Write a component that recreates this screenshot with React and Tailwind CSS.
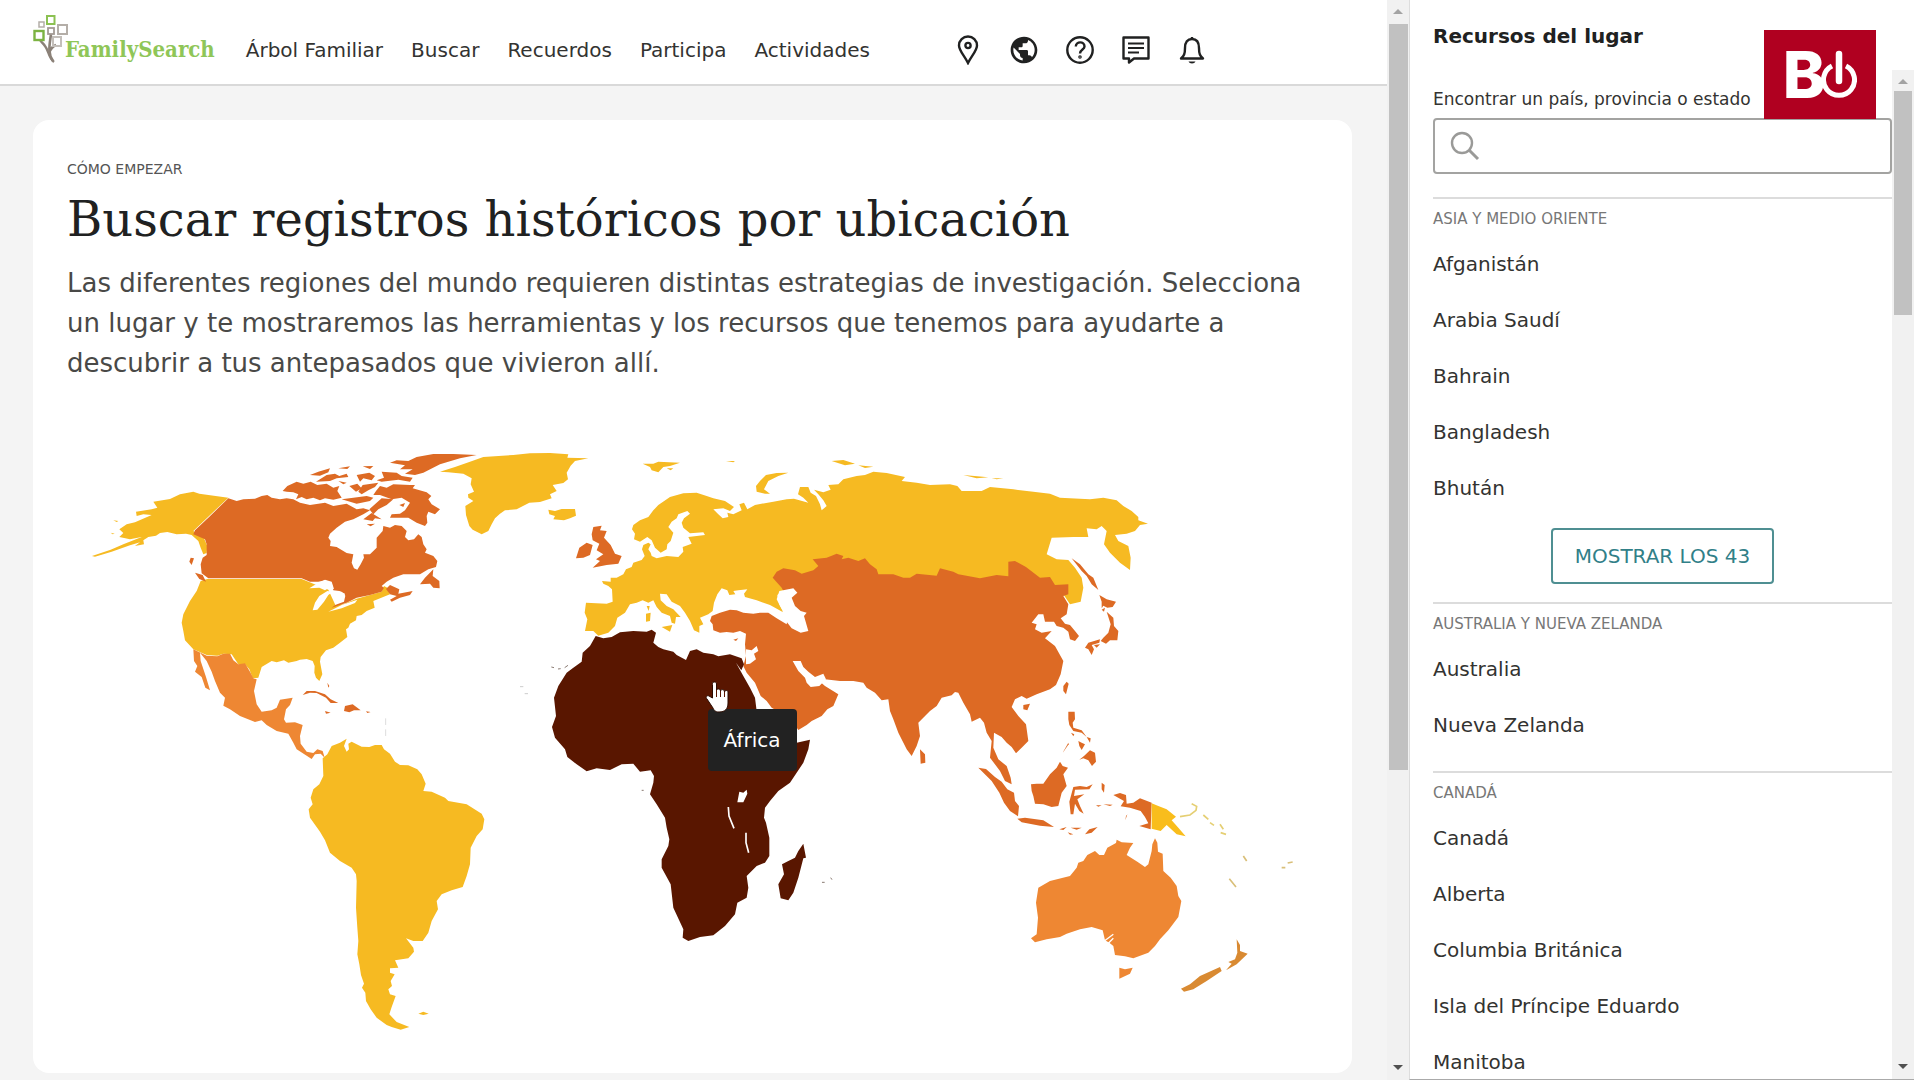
import { useState } from "react";
import { MdPublic } from "react-icons/md";

const NAV = ["Árbol Familiar", "Buscar", "Recuerdos", "Participa", "Actividades"];

const REGIONS = [
  {
    name: "Asia y Medio Oriente",
    places: ["Afganistán", "Arabia Saudí", "Bahrain", "Bangladesh", "Bhután"],
    more: "Mostrar los 43",
  },
  { name: "Australia y Nueva Zelanda", places: ["Australia", "Nueva Zelanda"] },
  {
    name: "Canadá",
    places: ["Canadá", "Alberta", "Columbia Británica", "Isla del Príncipe Eduardo", "Manitoba"],
  },
];

const YELLOW = "#f6ba22";
const ORANGE = "#dd6a24";
const AMBER = "#ee8733";
const DARK = "#591600";

function TreeMark() {
  return (
    <svg width="36" height="48" viewBox="0 0 36 48" fill="none" aria-hidden="true">
      <path d="M21 47C15 42 16 36 12 31C10 28 8 27 7 25" stroke="#8b8178" strokeWidth="2.4" />
      <path d="M20 46C14 38 17 28 18 19M16 38C18 33 20 31 23 30" stroke="#8b8178" strokeWidth="2.6" />
      <rect x="14" y="1" width="7.500" height="8" stroke="#8cc152" strokeWidth="2" />
      <rect x="6" y="7" width="5" height="5" stroke="#b4aea8" strokeWidth="1.500" />
      <rect x="15" y="13" width="6" height="6" stroke="#a39b94" strokeWidth="1.800" />
      <rect x="25" y="10" width="9" height="9" stroke="#b4aea8" strokeWidth="2" />
      <rect x="1.500" y="16" width="9" height="9" stroke="#7cb342" strokeWidth="2.400" />
      <rect x="20" y="22" width="8" height="9" stroke="#c4bfba" strokeWidth="2" />
    </svg>
  );
}

function PinIcon() {
  return (
    <svg width="28" height="30" viewBox="0 0 28 30" fill="none" stroke="#202121" strokeWidth="2.4" aria-hidden="true">
      <path d="M14 28C10 20 5 15.500 5 10.500a9 9 0 0 1 18 0C23 15.500 18 20 14 28Z" />
      <circle cx="14" cy="10.500" r="2.600" />
    </svg>
  );
}

function HelpIcon() {
  return (
    <svg width="28" height="30" viewBox="0 0 28 30" fill="none" stroke="#202121" strokeWidth="2.400" aria-hidden="true">
      <circle cx="14" cy="15" r="12.700" />
      <path d="M9.800 11.500C10 6 18.500 6 18.500 11.500C18.500 14.500 14 14.500 14 18.500" />
      <circle cx="14" cy="22" r="0.600" />
    </svg>
  );
}

function MessageIcon() {
  return (
    <svg width="28" height="30" viewBox="0 0 28 30" fill="none" stroke="#202121" strokeWidth="2.400" aria-hidden="true">
      <path d="M1.500 2.500H26.500V23.500H12L7 27.500V23.500H1.500Z" strokeLinejoin="round" />
      <path d="M6 8.500H22M6 13H22M6 17.500H17" strokeWidth="2" />
    </svg>
  );
}

function BellIcon() {
  return (
    <svg width="28" height="30" viewBox="0 0 28 30" fill="none" stroke="#202121" strokeWidth="2.400" aria-hidden="true">
      <path d="M3 23.500C6 21 7 19 7 13C7 7 9.500 4 14 4S21 7 21 13C21 19 22 21 25 23.500Z" strokeLinejoin="round" />
      <path d="M10.500 26.500H17.500C16.500 29 11.500 29 10.500 26.500Z" fill="#202121" stroke="none" />
      <path d="M14 2V4" />
    </svg>
  );
}

function ScrollTrack({ thumb }) {
  return (
    <div className="flex w-[22px] shrink-0 flex-col items-center bg-[#f1f1f1] pb-1" aria-hidden="true">
      <svg width="10" height="20" viewBox="0 0 10 20" className="shrink-0">
        <path d="M0 14L5 9L10 14Z" fill="#a3a3a3" />
      </svg>
      <div className={thumb} />
      <svg width="10" height="20" viewBox="0 0 10 20" className="mt-auto shrink-0">
        <path d="M0 9L5 14L10 9Z" fill="#505050" />
      </svg>
    </div>
  );
}

function WorldMap() {
  return (
    <svg viewBox="67 430 1251 610" className="block h-auto w-full" role="img" aria-label="Mapa del mundo">
      {/* América del Norte */}
      <g transform="translate(80 430) scale(0.33333)">
        <g fill={YELLOW}>
          <path d="M340 182L358 188L445 200L340 300L372 322L382 345L380 366L370 370L362 350L355 330L335 312L318 308L290 310L262 303L240 306L228 314L205 318L190 328L192 340L165 345L180 334L150 343L95 362L45 377L36 375L92 356L130 340L185 318L150 325L118 318L130 306L118 295L140 280L165 274L215 252L190 250L170 255L168 242L215 235L232 230L220 212L270 204L300 190Z" />
          <path d="M382 444H665L700 458L745 476L765 520L790 520L830 503L905 482L912 465L922 470L930 490L880 510L884 530L860 540L845 552L830 555L828 568L810 578L805 590L798 595L802 618L780 635L760 650L738 658L722 678L720 692L727 730L718 750L708 740L703 725L704 705L698 690L680 684L660 686L650 690L625 695L612 688L590 694L575 690L545 708L535 740L518 742L508 715L495 700L475 700L455 670L430 668L412 674L380 672L340 655L315 628L310 600L305 575L310 550L330 510L350 480L362 450Z" />
          <path d="M100 268L115 270L110 273ZM92 305L104 308L98 310Z" />
        </g>
        <g fill={ORANGE}>
          <path d="M445 202L470 210L490 205L525 203L545 195L562 192L575 200L600 205L620 202L640 205L660 215L690 222L735 215L760 225L800 218L830 235L850 232L870 238L850 250L820 265L795 272L770 290L750 308L745 320L752 330L750 345L770 348L800 366L820 370L815 395L822 412L832 416L842 400L852 380L850 370L870 370L890 350L890 320L908 300L910 285L930 290L945 282L965 285L980 300L975 318L985 328L1002 325L1015 310L1025 318L1030 340L1040 355L1035 365L1060 375L1072 390L1068 408L1045 415L1020 430L970 430L940 440L920 452L905 465L912 470L905 482L870 492L830 500L800 515L755 530L775 515L790 508L795 488L778 480L760 478L755 455L735 448L715 452L690 452L665 442H385L365 427L362 400L368 380L380 372L380 340L375 325L340 310L345 298L385 260Z" />
          <path d="M918 474L930 462L958 475L955 488L998 480L990 492L960 500L935 512L930 506L950 495L930 490Z" />
          <path d="M1020 460L1035 440L1060 415L1058 435L1078 450L1079 472L1060 470L1050 458Z" />
          <path d="M345 425L368 432L378 452L358 444ZM332 380L342 382L335 402L328 392Z" />
          <path d="M608 180L622 165L650 152L670 158L692 152L712 162L740 158L760 170L778 165L772 180L785 200L760 206L735 202L720 208L700 200L680 205L665 198L648 205L655 190L640 184L620 182Z" />
          <path d="M690 132L715 122L750 112L745 124L720 134ZM708 152L740 132L765 128L778 135L800 128L805 138L770 142L750 150ZM775 112L810 106L802 114ZM848 106L880 105L870 114ZM830 132L868 125L885 135L875 148L850 142L840 152ZM905 122L950 125L965 135L998 140L990 152L955 146L905 152L890 148L912 140Z" />
          <path d="M808 165L832 158L845 172L828 182ZM848 162L895 155L885 168L865 178L845 190L835 182ZM785 205L820 200L860 195L880 200L870 210L830 218ZM775 150L800 155L790 160Z" />
          <path d="M930 95L950 88L985 90L1010 78L1060 69L1120 69L1190 72L1140 82L1080 100L1030 125L1005 132L975 128L998 115L960 115L975 103Z" />
          <path d="M888 180L900 165L920 170L940 160L990 162L1005 162L998 172L1040 184L1054 195L1045 205L1055 220L1080 235L1065 250L1045 242L1040 255L1042 275L1035 285L1010 275L985 260L930 260L935 250L960 248L975 238L990 215L965 200L935 205L900 192L880 192Z" />
          <path d="M868 235L905 202L940 205L920 222L895 235L880 250ZM850 265L875 246L905 265L885 262L878 270ZM958 222L975 216L970 228ZM860 280L885 278L872 286Z" />
        </g>
        <g fill="#fff">
          <path d="M688 472L710 458L735 446L755 452L762 474L745 472L735 478L718 470Z" />
          <path d="M698 538L705 515L718 495L742 480L758 482L745 492L732 512L712 536Z" />
          <path d="M755 480L785 482L796 494L792 512L765 522L770 505Z" />
          <path d="M745 542L785 522L832 506L825 516L785 532Z" />
        </g>
        <path
          d="M340 655L380 674L412 676L430 668L450 668L460 688L475 700L495 697L510 722L520 742L530 745L522 780L530 820L545 842L575 838L590 830L600 806L638 800L630 822L618 835L612 865L618 875L645 874L668 882L660 915L662 938L680 962L700 966L712 955L728 960L734 980L722 968L705 970L695 984L650 955L640 935L625 908L590 900L560 882L545 868L525 873L480 855L450 835L430 824L435 800L420 785L405 750L395 722L380 690L360 665L362 690L378 738L390 778L376 770L365 738L345 722L352 705L342 690Z"
          fill={AMBER}
        />
        <g fill={ORANGE}>
          <path d="M668 792L680 780L705 780L735 790L752 805L775 816L752 816L738 800L710 786L690 785ZM795 825L818 820L842 838L822 838L808 844L792 840ZM735 840L752 845L738 848ZM858 841L872 843L862 846ZM742 755L748 765L745 770Z" />
        </g>
        <path d="M917 862V882M917 895V915" stroke="#ddd" strokeWidth="3" />
      </g>

      {/* América del Sur */}
      <g transform="translate(280 720) scale(0.33333)" fill={YELLOW}>
        <path d="M128 112L142 100L155 75L180 65L200 53L192 75L200 92L207 85L205 68L215 62L245 77L268 78L285 72L305 72L312 85L330 98L345 122L360 132L385 133L412 145L425 160L437 188L430 210L455 212L495 230L505 240L560 250L605 278L613 295L608 325L590 345L572 380L570 430L560 465L548 498L515 508L485 520L470 540L474 565L455 600L445 635L428 660L400 660L378 652L400 680L402 692L385 712L345 718L355 740L330 742L330 755L344 760L332 780L336 795L325 805L330 820L347 825L335 858L328 880L350 903L388 918L362 926L335 918L320 912L290 890L272 865L258 840L256 815L246 800L252 788L243 762L238 730L232 700L235 660L232 620L228 560L230 480L228 460L215 440L180 420L150 395L135 358L120 332L90 290L86 265L98 250L92 230L100 205L118 190L130 165Z" />
        <path d="M415 878L430 872L446 878L430 882Z" />
      </g>

      {/* Groenlandia y Europa */}
      <g transform="translate(440 430) scale(0.33333)">
        <g fill={YELLOW}>
          <path d="M0 122L45 108L90 92L130 78L220 72L270 67L330 66L385 70L382 80L445 82L405 90L392 104L380 125L384 145L370 156L338 162L350 180L330 190L335 202L300 213L268 215L230 235L195 238L180 248L165 262L155 280L145 300L125 310L98 296L88 285L78 252L76 225L100 210L85 200L84 190L102 182L92 160L95 142L70 128L25 124Z" />
          <path d="M325 236L345 240L365 234L405 234L408 254L390 262L372 268L340 265L345 255L328 250Z" />
          <path d="M608 98L640 98L655 92L720 95L690 105L670 108L655 124L635 118L630 108ZM680 112L700 112L692 118ZM858 90L885 90L880 94Z" />
          <path d="M1045 125L1010 126L978 132L960 150L948 165L950 182L975 188L990 188L972 175L985 150L1015 135Z" />
          <path d="M1175 90L1210 87L1245 98L1215 103ZM1255 103L1300 107L1275 111ZM1570 132L1645 139L1610 142ZM1655 142L1690 142L1670 145Z" />
          <path d="M438 515L500 518L518 512L516 475L505 465L490 458L486 450L512 452L512 440L530 440L550 430L558 415L575 408L580 395L605 387L614 375L606 355L610 342L625 335L632 340L625 355L632 365L635 375L650 382L680 375L715 378L730 362L728 348L755 338L745 318L795 312L790 304L750 307L730 290L725 275L732 262L750 248L742 240L715 250L710 262L695 272L685 288L700 305L692 330L682 340L680 355L662 365L645 350L635 328L622 318L600 332L582 325L585 308L576 295L580 282L600 268L625 258L640 238L655 222L690 198L730 187L770 185L800 195L820 202L855 210L882 228L870 240L850 232L820 235L835 250L848 262L865 258L862 245L880 250L905 238L898 220L912 215L922 235L945 222L1000 212L1040 205L1062 203L1105 215L1090 200L1074 190L1080 168L1105 168L1112 185L1128 195L1140 220L1145 238L1160 225L1150 208L1135 190L1122 176L1150 184L1172 176L1165 162L1195 160L1210 145L1250 135L1275 132L1300 122L1340 126L1395 138L1385 150L1430 155L1470 162L1530 160L1552 165L1565 180L1625 180L1650 168L1720 175L1780 182L1830 188L1860 200L1950 205L1990 200L2030 208L2050 225L2075 240L2095 258L2095 268L2124 278L2100 282L2085 300L2060 308L2025 312L2035 330L2065 345L2072 380L2070 417L2040 395L2010 365L1992 340L2000 300L1985 285L1970 295L1940 292L1945 318L1900 318L1835 320L1820 370L1850 385L1885 387L1905 410L1925 440L1930 470L1922 512L1890 520L1870 490L1700 450H1150L1000 440L1035 475L1012 492L1018 520L1032 545L990 522L950 508L915 498L912 488L922 475L895 478L880 480L886 490L868 492L862 478L845 472L832 490L822 515L818 540L805 550L780 560L790 580L778 585L778 605L762 598L750 570L735 545L720 525L695 512L680 490L660 488L662 508L680 525L700 535L722 558L708 558L705 578L695 575L690 555L665 545L650 528L640 508L625 515L608 508L590 515L570 520L555 545L532 560L525 585L505 605L475 614L460 600L435 600L442 565L434 545Z" />
          <path d="M665 588L697 582L690 602ZM618 548L632 545L630 570L618 572ZM620 525L629 525L626 540Z" />
        </g>
        <g fill={ORANGE}>
          <path d="M455 310L460 288L485 284L480 298L500 300L492 320L512 342L525 368L545 375L535 398L500 402L458 410L480 390L468 385L490 370L470 358L478 338L458 328ZM408 382L418 350L440 335L458 342L450 372L430 380Z" />
        </g>
      </g>

      {/* Asia */}
      <g transform="translate(740 430) scale(0.33333)">
        <g fill={ORANGE}>
          <path d="M98 440L110 422L130 412L165 418L185 428L220 418L235 405L218 385L260 380L290 368L310 375L305 385L325 380L355 390L375 382L390 400L410 415L415 430L460 430L490 440L510 440L530 428L590 434L600 412L640 422L655 430L720 442L770 432L805 436L805 392L825 390L858 408L900 440L930 438L945 462L985 460L985 490L970 495L985 520L980 550L962 562L975 578L990 582L1005 600L1017 615L1005 630L990 625L985 602L970 590L950 585L942 572L915 572L910 550L895 550L875 575L890 580L885 595L905 605L935 600L915 622L945 645L960 672L970 690L962 730L948 762L930 775L890 790L860 803L845 795L825 805L815 828L835 855L858 880L865 930L845 950L828 967L815 948L800 935L785 918L762 905L760 950L775 985L800 1005L812 1040L815 1060L795 1050L780 1020L750 980L755 930L740 905L732 875L720 860L695 872L690 850L670 815L655 785L645 783L635 793L605 800L590 825L570 840L535 875L540 915L530 945L515 975L500 955L475 905L460 865L450 840L445 805L425 808L405 785L380 770L370 755L340 750L300 750L255 745L250 732L235 748L255 765L295 790L280 825L262 835L245 855L215 870L200 882L175 897L150 860L95 830L80 810L62 795L45 755L20 725L10 705L18 675L15 640L18 608L0 600L-20 605L-40 603L-60 605L-80 598L-82 580L-90 570L-85 555L-60 545L-30 536L-10 538L10 545L40 548L60 545L85 545L110 562L140 580L150 520L125 470Z" />
          <path d="M995 382L1020 400L1045 430L1060 440L1075 477L1055 460L1040 435L1025 420ZM1078 492L1100 505L1128 512L1118 528L1102 530L1090 524L1085 532L1085 512ZM1100 542L1120 560L1122 585L1135 600L1132 628L1110 628L1098 638L1082 630L1090 620L1105 605L1112 580ZM1035 650L1045 635L1080 625L1078 635L1055 642L1062 655L1055 672L1045 655ZM1062 642L1080 640L1070 650ZM1085 536L1095 530L1092 542Z" />
          <path d="M970 765L980 752L986 758L978 790L970 780ZM850 822L870 818L862 838L850 835ZM540 955L555 970L556 995L542 998Z" />
          <path d="M-20 626L-5 622L-12 630Z" />
        </g>
        <g fill="#fff">
          <path d="M110 505L118 480L160 472L172 485L155 500L165 525L182 540L200 545L192 555L205 600L182 605L155 592L138 570L125 560L128 540L120 525Z" />
          <path d="M158 690L182 690L190 708L205 722L225 738L250 728L258 745L238 765L212 768L200 755L195 740L175 720Z" />
          <path d="M18 655L35 658L50 645L55 660L42 668L48 685L30 698L18 700Z" />
        </g>
      </g>

      {/* África */}
      <g transform="translate(530 600) scale(0.33333)">
        <path
          className="cursor-pointer"
          d="M197 105L220 112L245 108L270 94L310 90L350 92L365 86L378 95L370 125L385 138L400 145L430 152L440 162L468 177L480 150L500 145L520 155L550 160L565 166L600 160L635 172L642 190L634 208L618 185L640 225L660 260L675 290L680 330L710 380L735 410L770 430L800 425L840 416L835 445L820 485L800 515L780 545L745 570L720 600L705 620L702 650L708 665L718 710L718 765L705 785L680 795L650 825L655 860L650 890L622 905L615 940L585 975L550 1003L510 1008L475 1020L458 1010L460 985L430 920L422 850L395 800L395 775L415 735L418 715L410 680L405 650L380 610L360 580L370 545L372 525L362 508L330 512L310 488L275 490L240 507L200 502L170 511L140 490L112 468L105 445L75 410L66 378L78 345L72 290L85 255L110 215L130 200L155 182L158 155L180 135Z"
          fill={DARK}
        />
        <path d="M820 728L828 770L820 772L805 830L790 875L775 898L752 892L745 850L762 820L756 790L775 780L795 770L805 750Z" fill={DARK} />
        <path d="M628 572L640 575L650 566L652 578L640 604L622 604Z" fill="#fff" />
        <path d="M595 618L597 645L612 682M648 695L648 725L656 755" stroke="#fff" strokeWidth="5" fill="none" />
        <path d="M64 198L72 200M84 204L92 203M104 200L114 193M335 568H341M876 844H884M902 830L906 836" stroke="#8a7a72" strokeWidth="3" />
        <path d="M-30 257H-20M-16 278H-6" stroke="#ccc" strokeWidth="3" />
      </g>

      {/* Sudeste asiático y Oceanía */}
      <g transform="translate(900 650) scale(0.33333)">
        <g fill={ORANGE}>
          <path d="M235 350L258 354L285 378L305 392L322 415L342 425L345 450L357 465L354 496L330 480L312 455L298 425L275 390Z" />
          <path d="M352 503L375 500L430 508L462 528L420 524L365 514ZM478 535L500 528L490 537ZM512 530L545 530L530 536ZM503 544L520 550L510 551ZM555 550L568 535L593 528L575 545Z" />
          <path d="M393 400L410 398L430 398L450 370L470 350L480 332L488 345L504 350L490 370L500 405L485 425L475 465L455 468L430 460L405 458L400 435L395 420Z" />
          <path d="M512 490L508 452L520 408L540 405L560 408L578 400L568 415L525 416L522 435L553 430L532 445L540 465L551 488L538 480L525 458L520 490Z" />
          <path d="M605 395L614 402L612 425L605 415ZM588 463L605 463L595 467ZM610 460L638 461L630 465ZM678 495L682 490L676 508Z" />
          <path d="M640 432L660 426L678 432L680 458L700 455L720 442L755 455L752 535L718 525L745 517L735 498L722 480L690 470L662 466L672 450Z" />
          <path d="M505 182L524 182L525 205L518 215L520 230L545 238L560 258L545 245L520 240L508 222L505 205ZM535 270L545 275L555 280L545 297L538 285ZM560 258L572 262L570 275ZM513 245L523 250L520 256ZM538 326L552 315L570 298L585 305L588 332L576 345L565 328L550 322Z" />
          <path d="M505 275L488 305L492 300L506 280Z" />
        </g>
        <path d="M755 457L775 465L800 475L828 497L815 508L835 530L857 556L830 550L800 522L782 540L755 533Z" fill="#f9bd1c" />
        <path d="M840 497L870 492L888 478L890 466L875 458M910 492L925 505M930 515L942 523M960 520L970 535M962 545L978 550" stroke="#e5cf73" strokeWidth="5" fill="none" />
        <path d="M988 683L1008 708M1030 615L1040 630M1145 650H1156M1163 636L1178 633" stroke="#d9bf79" strokeWidth="5" fill="none" />
        <g fill={AMBER}>
          <path d="M393 862L410 850L414 800L408 755L415 710L450 690L510 675L530 650L535 635L550 630L562 612L585 600L598 612L612 612L622 590L648 576L650 566L665 574L700 576L690 590L680 612L712 632L735 648L745 640L755 600L757 580L765 562L772 575L774 602L788 608L790 660L812 680L830 705L835 735L844 750L835 798L805 838L780 865L765 885L745 905L700 922L675 916L645 912L640 885L628 875L615 868L608 838L575 828L540 835L500 848L480 858L440 865L405 874Z" />
          <path d="M658 950L675 955L698 950L690 968L658 983Z" />
        </g>
        <path d="M843 1013L870 1000L900 975L960 948L965 960L920 990L880 1015L852 1022ZM1010 865L1020 882L1020 900L1043 908L1010 940L978 958L995 938L985 933L1005 925L1012 905Z" fill="#d98a32" />
        <path d="M610 872L640 850M622 880L640 862" stroke="#fff" strokeWidth="4" />
      </g>
    </svg>
  );
}

function HandCursor() {
  return (
    <svg width="24" height="32" viewBox="0 0 24 32" aria-hidden="true">
      <path
        d="M9 1C7 1 7.500 3 7.500 5V17L4 15C2 14 0 16 2 18L8 27C9 29 10 31 14 31C20 31 23 28 23 22V11C23 9 20 9 19.500 11C19.500 8 16 8 15.500 10C15 7 12 8 11.500 9V3C11.500 1 10 1 9 1Z"
        fill="#fff"
        stroke="#2b0b00"
        strokeWidth="1"
      />
      <path d="M11.500 9V16M15.500 10V16M19.500 11V16" stroke="#591600" strokeWidth="1" />
    </svg>
  );
}

export default function App() {
  const [query, setQuery] = useState("");

  return (
    <div className="flex h-screen overflow-hidden bg-[#f4f4f4] font-['DejaVu_Sans',Verdana,sans-serif] text-[#333331]">
      <div className="flex min-w-0 flex-1 flex-col">
        <header className="flex h-[86px] shrink-0 items-center border-b-2 border-[#d9d9d9] bg-white pl-[33px]">
          <a href="#inicio" className="flex h-[54px] items-start">
            <TreeMark />
            <span className="-ml-1 pt-5 font-['DejaVu_Serif_Condensed','DejaVu_Serif',serif] text-[22px] leading-7 font-bold text-[#8fc658]">
              FamilySearch
            </span>
          </a>
          <nav className="flex gap-7 pt-4 pl-[31px] text-xl whitespace-nowrap">
            {NAV.map((item) => (
              <a key={item} href="#nav">
                {item}
              </a>
            ))}
          </nav>
          <div className="flex items-center gap-7 pt-4 pl-[84px] text-[#202121]">
            <button type="button" aria-label="Lugares"><PinIcon /></button>
            <button type="button" aria-label="Idioma"><MdPublic size={32} className="-mx-[2px]" /></button>
            <button type="button" aria-label="Ayuda"><HelpIcon /></button>
            <button type="button" aria-label="Mensajes"><MessageIcon /></button>
            <button type="button" aria-label="Notificaciones"><BellIcon /></button>
          </div>
        </header>

        <main className="pt-[34px] pr-[35px] pl-[33px]">
          <section className="rounded-2xl bg-white px-[34px] pt-[39px] pb-8">
            <p className="text-sm leading-5 text-[#555] uppercase">Cómo empezar</p>
            <h1 className="pt-1 font-['DejaVu_Serif',serif] text-5xl leading-[72px] whitespace-nowrap text-[#202121]">
              Buscar registros históricos por ubicación
            </h1>
            <p className="pt-2 text-[26px] leading-10 text-[#494947]">
              Las diferentes regiones del mundo requieren distintas estrategias de investigación. Selecciona un lugar y te
              mostraremos las herramientas y los recursos que tenemos para ayudarte a descubrir a tus antepasados que
              vivieron allí.
            </p>
            <div className="relative mt-12">
              <WorldMap />
              <div className="absolute top-[45.500%] left-[51.200%] rounded bg-[#222] px-4 py-4 text-xl leading-[30px] text-white" role="tooltip">
                África
              </div>
              <div className="absolute top-[41%] left-[51%]">
                <HandCursor />
              </div>
            </div>
          </section>
        </main>
      </div>

      <ScrollTrack thumb="h-[746px] mt-1 w-[19px] shrink-0 bg-[#c1c1c1]" />

      <aside className="relative flex w-[505px] shrink-0 flex-col border-b border-l border-b-[#aaa] border-l-[#ddd] bg-white">
        <h2 className="h-[70px] shrink-0 pt-5 pl-[23px] text-xl leading-8 font-bold text-[#202121]">Recursos del lugar</h2>
        <div className="flex min-h-0 flex-1">
          <div className="min-w-0 flex-1 overflow-hidden pt-4 pl-[23px]">
            <label htmlFor="lugar" className="block text-[17px] leading-[26px]">
              Encontrar un país, provincia o estado
            </label>
            <div className="mt-[6px] mb-[23px] flex h-14 items-center rounded border-2 border-[#a3a3a1] pl-[15px]">
              <svg width="30" height="30" viewBox="0 0 30 30" fill="none" stroke="#9a9a98" strokeWidth="2.400" aria-hidden="true">
                <circle cx="12" cy="12" r="10" />
                <path d="M19 19L28 28" strokeWidth="3" />
              </svg>
              <input
                id="lugar"
                type="text"
                value={query}
                onChange={(e) => setQuery(e.target.value)}
                className="h-full min-w-0 flex-1 px-3 text-xl outline-none"
              />
            </div>
            {REGIONS.map((region) => (
              <section key={region.name} className="border-t-2 border-[#dcdcdc] pb-[18px]">
                <h3 className="pt-[10px] pb-[7px] text-[15px] leading-5 text-[#777] uppercase">{region.name}</h3>
                <ul>
                  {region.places.map((place) => (
                    <li key={place}>
                      <a href="#lugar" className="block py-[14px] text-xl leading-7">
                        {place}
                      </a>
                    </li>
                  ))}
                </ul>
                {region.more && (
                  <div className="flex justify-center pt-3">
                    <button type="button" className="h-14 rounded border-2 border-[#4f8f92] px-[22px] text-xl text-[#318088] uppercase">
                      {region.more}
                    </button>
                  </div>
                )}
              </section>
            ))}
          </div>
          <ScrollTrack thumb="h-[224px] mt-px w-[18px] shrink-0 bg-[#c1c1c1]" />
        </div>

        <div className="absolute top-[30px] right-[38px] flex h-[89px] w-[112px] items-center justify-center bg-[#b00020] text-white">
          <span className="font-['Inter','Liberation_Sans',sans-serif] text-[64px] leading-none font-extrabold">B</span>
          <svg width="36" height="54" viewBox="0 0 36 54" fill="none" stroke="#fff" className="-ml-1" aria-hidden="true">
            <path d="M11 18A15.500 15.500 0 1 0 25 18" strokeWidth="5" />
            <path d="M18 6V33" strokeWidth="6.500" strokeLinecap="round" />
          </svg>
        </div>
      </aside>
    </div>
  );
}
